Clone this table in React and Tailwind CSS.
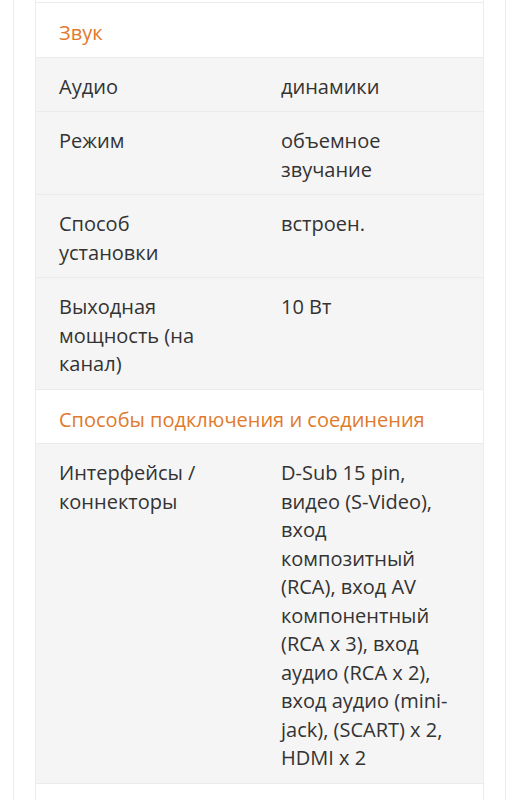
const sections = [
  {
    title: 'Звук',
    rows: [
      { label: ['Аудио'], value: ['динамики'] },
      { label: ['Режим'], value: ['объемное', 'звучание'] },
      { label: ['Способ', 'установки'], value: ['встроен.'] },
      { label: ['Выходная', 'мощность (на', 'канал)'], value: ['10 Вт'] },
    ],
  },
  {
    title: 'Способы подключения и соединения',
    rows: [
      {
        label: ['Интерфейсы /', 'коннекторы'],
        value: [
          'D-Sub 15 pin,',
          'видео (S-Video),',
          'вход',
          'композитный',
          '(RCA), вход AV',
          'компонентный',
          '(RCA x 3), вход',
          'аудио (RCA x 2),',
          'вход аудио (mini-',
          'jack), (SCART) x 2,',
          'HDMI x 2',
        ],
      },
    ],
  },
];

const Lines = ({ lines }) => (
  <>
    {lines.map((l, i) => (
      <span key={i} className="block whitespace-nowrap">{l}</span>
    ))}
  </>
);

export default function App() {
  return (
    <div
      className="min-h-[800px] bg-white px-[13px] text-[20px] leading-[28.5px] text-[#333]"
      style={{ fontFamily: '"Open Sans", "Noto Sans", sans-serif' }}
    >
      <div className="border-x border-[#ededed] px-[21px]">
        <div className="border-x border-[#ececec]">
          <div className="h-[3px] border-b border-[#ebebeb] bg-white" />
          {sections.map(section => (
            <div key={section.title}>
              <div className="border-b border-[#ebebeb] bg-white px-[23px] pt-[16px] pb-[9px] text-[#e07a2c]">
                {section.title}
              </div>
              {section.rows.map((row, i) => (
                <div
                  key={i}
                  className="grid grid-cols-[222px_1fr] border-b border-[#ebebeb] bg-[#f5f5f5] pl-[23px] pr-[20px] pt-[15px] pb-[10px]"
                >
                  <div><Lines lines={row.label} /></div>
                  <div><Lines lines={row.value} /></div>
                </div>
              ))}
            </div>
          ))}
          <div className="h-[40px] bg-white" />
        </div>
      </div>
    </div>
  );
}
